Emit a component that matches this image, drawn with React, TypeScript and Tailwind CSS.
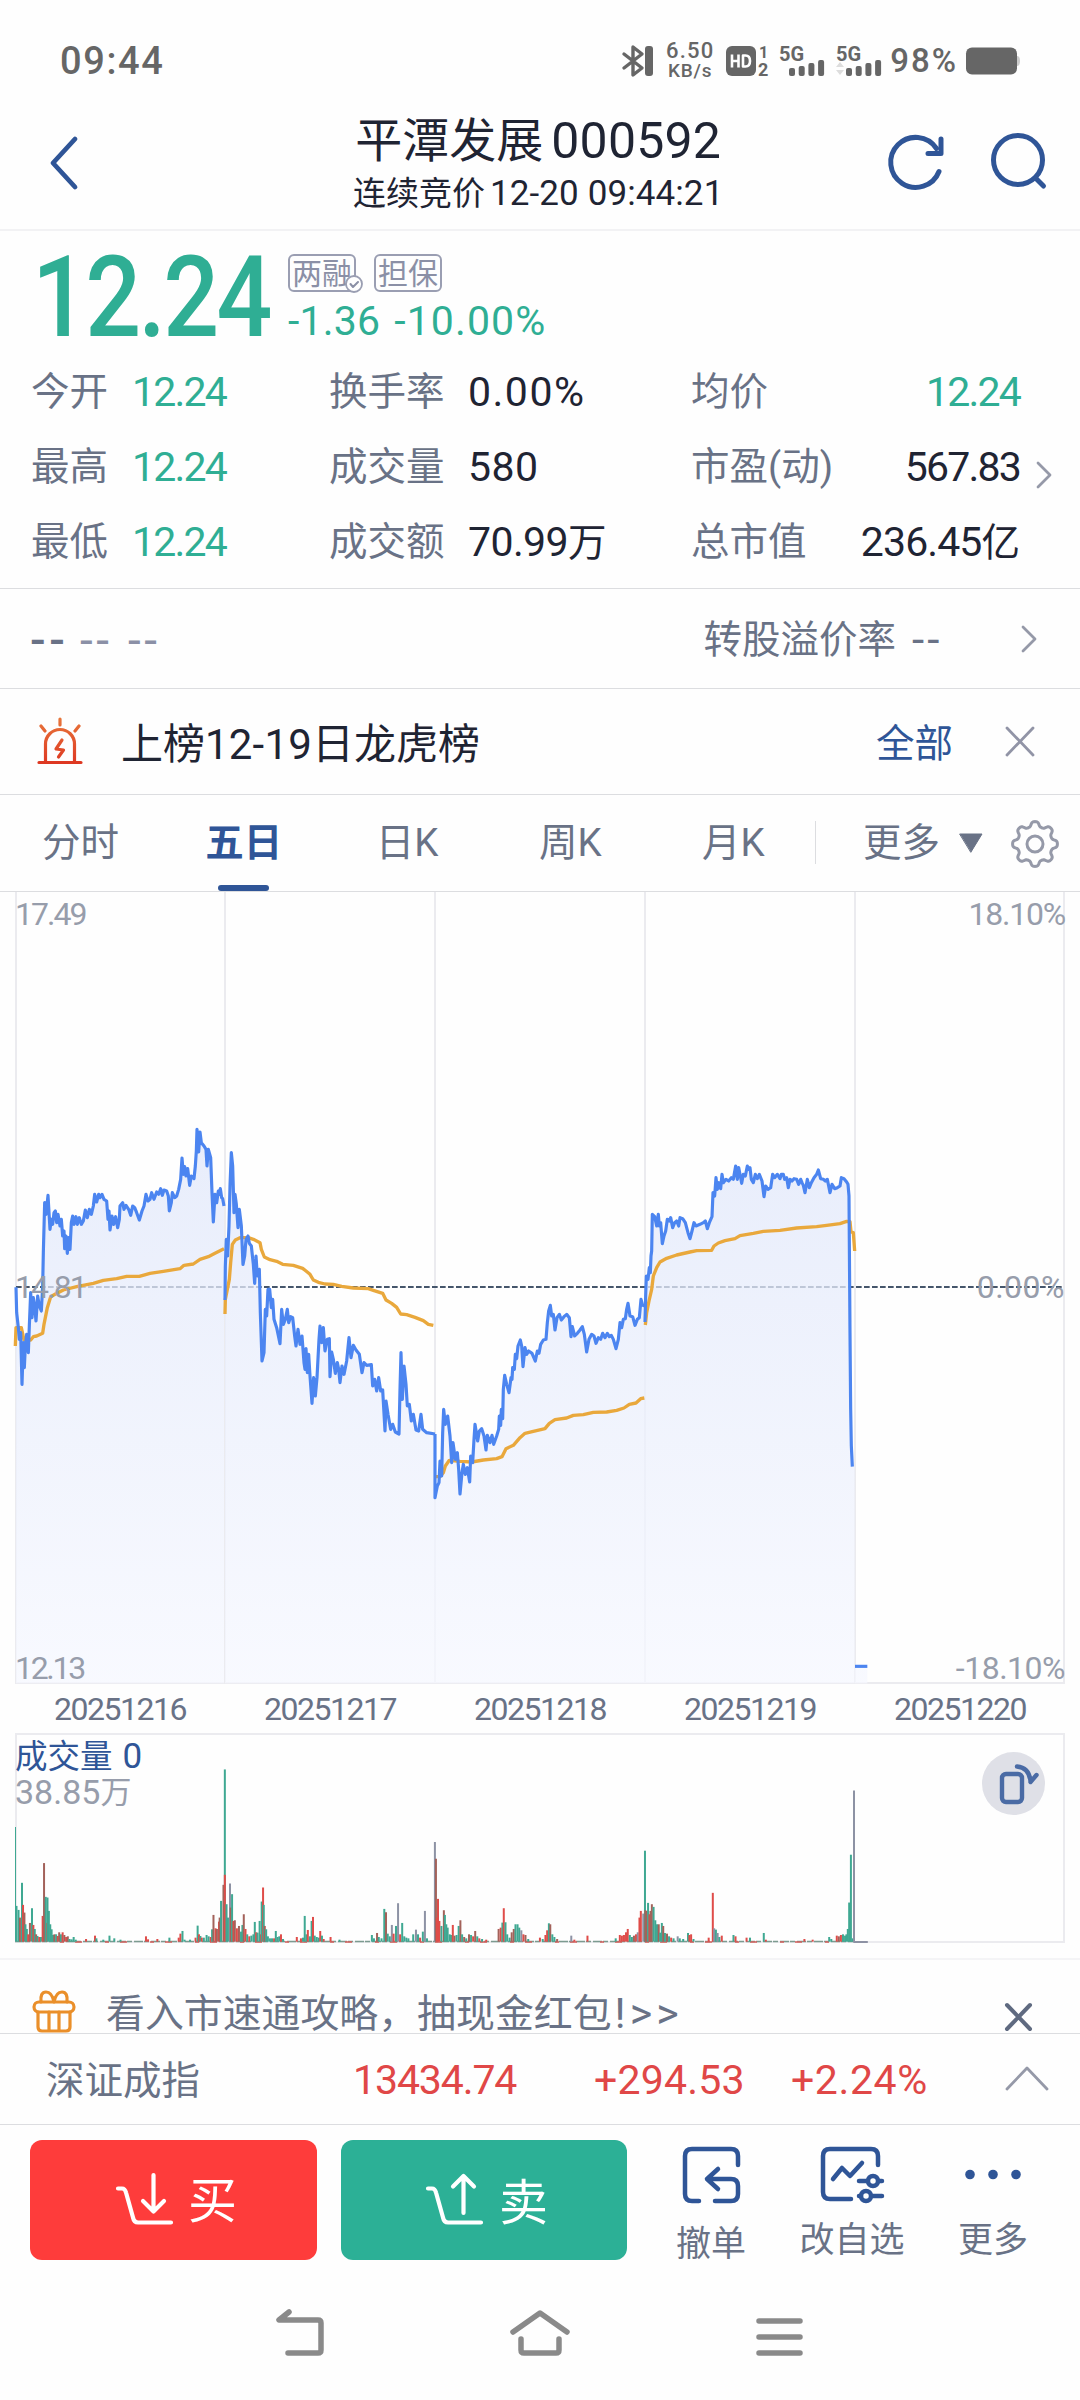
import type { ReactNode } from 'react';

const BLUE = '#2f5597';

// Traces are plotted at three units per pixel; dx shifts each session along the x axis.
const sessions = [
  {
    dx: 0,
    start: 48,
    end: 672,
    price:
      '48,624 50,700 55,745 58,780 62,760 66,915 70,790 73,865 76,800 80,765 85,820 88,740 92,640 96,715 100,655 104,680 108,725 113,650 118,680 124,695 128,620 130,520 134,370 138,405 144,348 150,450 154,420 158,435 162,400 166,395 170,430 174,405 180,440 184,420 188,470 192,455 194,508 198,470 202,522 206,475 210,510 214,430 218,410 222,435 228,412 232,435 238,415 244,435 250,425 256,392 262,415 268,390 274,405 280,380 284,345 290,368 296,345 300,355 306,345 312,360 320,365 324,420 327,395 330,452 336,410 341,435 347,412 353,445 358,420 360,380 368,370 372,390 378,378 386,390 392,408 398,380 404,385 410,400 418,422 426,395 432,380 438,345 444,365 450,360 455,340 462,360 470,338 476,345 482,328 487,348 492,332 500,335 505,350 508,395 514,370 517,340 524,355 530,350 536,330 542,300 546,236 550,285 554,262 558,290 563,268 569,318 574,290 582,298 586,260 589,215 591,150 596,218 600,158 604,190 612,200 618,210 621,260 625,210 632,235 636,340 640,428 645,345 650,370 655,335 658,345 661,328 665,355 668,358 672,380',
    avg: '46,800 48,745 64,745 72,782 92,782 100,772 110,770 128,762 132,735 142,685 152,652 165,645 190,632 230,622 280,612 310,603 350,598 380,591 418,591 450,582 490,576 540,568 552,558 580,554 600,540 625,532 645,522 672,508',
  },
  {
    dx: 0,
    start: 675,
    end: 1305,
    price:
      '675,662 676,560 679,480 683,530 687,440 690,320 694,220 698,260 702,400 705,345 709,375 714,445 718,390 724,440 729,555 734,530 738,480 744,470 748,492 754,500 760,555 764,612 768,530 772,590 778,570 781,700 786,845 792,820 796,690 800,710 804,630 809,630 814,685 818,660 822,720 830,745 840,793 845,690 850,735 856,720 862,690 866,730 872,712 878,715 884,770 888,800 894,750 900,795 906,770 912,850 915,870 918,808 922,880 926,825 930,890 936,972 941,895 946,950 951,895 957,780 960,740 965,790 970,745 975,815 982,780 988,778 990,892 995,818 1000,840 1006,882 1012,850 1016,870 1020,910 1026,860 1032,885 1040,845 1047,775 1053,835 1060,798 1068,812 1078,825 1086,880 1092,850 1100,858 1114,856 1118,920 1124,900 1130,935 1136,895 1142,935 1148,932 1155,1055 1158,965 1164,1005 1172,1050 1178,1035 1186,1058 1197,1064 1200,930 1203,820 1207,960 1212,860 1218,915 1222,980 1228,975 1234,1025 1240,1005 1248,1052 1256,1055 1263,1005 1268,1050 1280,1060 1305,1064',
    avg: '675,704 676,660 682,630 688,600 692,550 697,495 706,482 720,475 745,475 760,480 780,490 784,510 793,533 810,541 830,546 848,555 880,558 908,567 918,575 930,585 940,602 955,609 975,614 1000,615 1025,621 1060,626 1105,628 1120,633 1148,642 1158,662 1175,672 1190,684 1202,704 1220,706 1245,714 1270,724 1285,735 1300,738',
  },
  {
    dx: 1200,
    start: 105,
    end: 735,
    price:
      '105,1064 105,1255 112,1220 117,1210 120,1145 125,1190 128,1060 131,990 136,1035 143,1010 150,1070 155,1150 159,1090 166,1140 172,1120 176,1170 180,1244 186,1180 190,1155 196,1185 202,1165 209,1208 212,1130 218,1150 222,1080 225,1035 233,1085 238,1055 245,1048 252,1070 258,1112 262,1068 270,1090 276,1068 281,1095 290,1070 296,1050 298,1010 302,1038 304,990 308,1018 310,930 314,888 320,915 327,940 333,895 336,900 338,865 343,870 346,825 350,838 354,800 361,782 365,800 369,862 375,805 380,825 386,815 396,822 406,845 412,815 417,822 422,795 430,782 438,780 442,730 446,695 451,678 455,710 460,705 465,752 471,715 478,705 484,722 492,712 500,705 508,715 513,772 517,742 524,770 532,762 540,752 547,742 553,765 560,818 567,780 575,765 582,770 588,792 595,775 602,780 608,762 615,775 622,762 628,772 634,768 640,780 648,808 655,780 660,730 665,745 670,720 676,718 680,690 684,672 690,710 698,712 705,738 712,720 718,715 723,660 728,678 735,680',
    avg: '108,1192 120,1192 130,1180 136,1160 148,1143 180,1146 215,1148 250,1142 290,1138 306,1132 318,1108 340,1098 360,1075 375,1062 400,1056 435,1048 448,1032 465,1021 500,1016 520,1008 550,1006 580,999 620,998 650,993 672,986 688,975 708,971 722,958 733,956',
  },
  {
    dx: 1860,
    start: 75,
    end: 704,
    price:
      '75,728 77,650 79,590 84,600 88,565 91,580 93,530 95,515 97,405 104,412 110,440 115,405 118,440 122,430 127,493 132,470 137,455 142,420 148,425 152,415 158,445 164,430 170,425 176,440 180,415 188,418 196,430 204,460 210,478 216,455 222,430 228,440 240,435 250,430 256,425 262,448 268,430 276,412 279,340 284,350 288,295 292,330 297,310 302,328 306,285 310,310 318,300 326,305 334,295 340,300 347,260 352,300 356,265 361,290 365,312 370,285 376,290 382,260 386,270 390,265 394,300 400,310 406,285 412,298 418,285 426,305 432,352 437,320 444,330 452,325 458,285 464,295 472,285 480,298 484,285 490,285 494,300 500,295 505,325 510,300 516,305 522,298 530,300 536,315 542,300 546,310 550,318 555,340 562,300 568,325 574,310 582,295 590,285 595,272 602,298 610,300 616,305 622,300 626,320 630,340 636,315 644,328 652,325 660,320 664,295 672,298 680,308 684,315 687,350 690,760 692,990 694,1100 697,1162',
    avg: '76,737 80,700 87,665 95,630 100,590 110,565 120,548 140,537 170,527 210,518 230,514 275,513 282,500 295,491 315,484 345,478 360,469 400,462 430,456 480,453 530,446 590,442 620,438 660,433 680,426 690,427 693,458 700,460 704,515',
  },
  { dx: 1860, start: 705, end: 742, price: '705,1761 742,1761', avg: '' },
];

// position:height+colour (g down, r up, n flat, b mixed)
const volumes =
  '48:105g 54:93g 58:70b 64:174g 67:108r 71:85b 74:50g 78:36g 82:20r 87:54b 93:98g 97:48r 101:36g 105:20b 109:15g 114:12r 119:12g 124:75r 128:233b 133:132g 137:54r 138:130g 142:90g 146:50g 150:35g 154:18g 158:20b 163:20g 168:15r 172:26b 177:20g 182:26r 187:18b 192:12r 197:14b 202:6g 208:5g 214:12g 220:4g 250:6r 276:16r 280:8g 300:4g 318:16g 332:8g 350:4g 424:14r 430:5r 457:6r 492:10g 519:10r 524:22r 530:30g 536:4g 552:4g 568:10r 574:46g 578:20r 582:15g 586:10r 592:10g 600:18g 606:14g 612:12r 616:35g 620:78b 626:38r 630:36b 636:58r 638:70b 642:120g 649:168b 653:513g 653:198r 658:110g 662:70g 668:172n 670:100b 674:140g 678:60r 682:62b 688:38r 694:45b 700:28g 704:48g 708:80b 713:36r 718:20g 724:14r 730:16g 736:20g 740:57g 744:26r 748:25g 754:60g 758:20r 760:118g 764:160r 766:108g 769:45b 773:35g 778:14g 784:8g 790:8g 796:8r 801:30g 806:12g 811:14g 816:20r 822:6g 862:12r 874:8r 880:10g 885:75g 890:20g 894:33r 900:14g 905:60g 909:72r 914:16g 920:12g 926:10g 930:30r 935:16g 940:6r 960:12r 986:4g 1080:18g 1086:8g 1095:24b 1100:12g 1108:8g 1116:96g 1121:86b 1126:22g 1132:14g 1138:48n 1143:22r 1150:45g 1156:113n 1162:20r 1168:54g 1174:14g 1180:10g 1186:8g 1200:20g 1208:34n 1214:20g 1220:10r 1228:28g 1234:90n 1240:8g 1263:296n 1266:246b 1269:70r 1272:126r 1276:60r 1282:45g 1289:92b 1292:78g 1296:50g 1300:40g 1306:20g 1310:18g 1315:48r 1320:16b 1326:18g 1332:45g 1337:62b 1342:20g 1348:12b 1354:8g 1362:20b 1368:18g 1374:14r 1380:30b 1386:14g 1392:8r 1400:6g 1412:4r 1448:36b 1454:40r 1459:55g 1463:98r 1468:56g 1473:20g 1480:10g 1486:26b 1492:36b 1497:50g 1503:50g 1508:40g 1514:32n 1520:20r 1526:18b 1534:6g 1568:10r 1576:6g 1584:18r 1589:32r 1594:53g 1598:50b 1604:20g 1610:12g 1618:6b 1659:16n 1668:4r 1706:16r 1788:8g 1800:18r 1806:16r 1812:18r 1818:26r 1823:36r 1829:18g 1835:12g 1841:16b 1847:20r 1852:26n 1857:70r 1861:90r 1868:82n 1873:270g 1874:92b 1878:90b 1882:114g 1886:80r 1889:90b 1893:110b 1898:102g 1903:62g 1908:50g 1913:50b 1917:25g 1922:54g 1926:45b 1931:24g 1937:22b 1943:14g 1949:10r 1956:8g 1968:14n 1974:8g 1984:6g 1998:24g 2002:18r 2007:20r 2014:6g 2058:10r 2070:144r 2074:38n 2079:34g 2084:24n 2089:12g 2096:16r 2130:18g 2136:14r 2168:10r 2178:10g 2218:24g 2224:4r 2336:6r 2360:4r 2408:12g 2414:6g 2430:16r 2436:14b 2442:18r 2448:20g 2454:16g 2458:20g 2462:36g 2466:115g 2471:258g 2476:8g 2480:450n'
    .split(' ')
    .map((v) => {
      const [x, rest] = v.split(':');
      return { x: Number(x), h: parseInt(rest, 10), kind: rest.slice(-1) };
    });

const barColor: Record<string, string> = { g: '#3fa892', r: '#df4c49', n: '#8d92a4', b: '#a3625a' };

// eight-lobed outline around (25, 25)
const gearPoints = Array.from({ length: 160 }, (_, i) => {
  const a = (i / 160) * Math.PI * 2;
  const r = 20 + 2.6 * Math.tanh(1.6 * Math.cos(8 * a));
  return `${(25 + r * Math.sin(a)).toFixed(2)},${(25 - r * Math.cos(a)).toFixed(2)}`;
}).join(' ');

function Icon({ w, h, className = '', children }: { w: number; h: number; className?: string; children: ReactNode }) {
  return (
    <svg
      width={w}
      height={h}
      viewBox={`0 0 ${w} ${h}`}
      fill="none"
      strokeLinecap="round"
      strokeLinejoin="round"
      className={`block shrink-0 overflow-visible ${className}`}
    >
      {children}
    </svg>
  );
}

function Signal({ data }: { data?: boolean }) {
  return (
    <Icon w={46} h={32}>
      <text x="0" y="15.5" fontSize="20" fontWeight="700" fill="#666">5G</text>
      {[8, 10, 13, 16].map((h, i) => (
        <rect key={h} x={10 + i * 9.7} y={31 - h} width="6" height={h} rx="2" fill="#666" />
      ))}
      {data && <path d="M0 22l4-5 4 5zM0 25h8l-4 5z" fill="#ddd" />}
    </Icon>
  );
}

function StatusBar() {
  return (
    <div className="flex h-[94px] items-center pt-[28px] pr-[60px] pl-[60px] font-medium text-[#666]">
      <span className="text-[38px] leading-none tracking-[1.6px]">09:44</span>
      <div className="ml-auto flex items-center">
        <Icon w={32} h={32}>
          <path d="M2 9l18 14-9 7V2l9 7L2 23" stroke="#666" strokeWidth="3.4" />
          <rect x="23" y="1" width="8" height="30" rx="3" fill="#666" />
        </Icon>
        <div className="ml-[10px] flex w-[52px] flex-col items-center leading-none">
          <span className="text-[22px] leading-[20px] tracking-[1.2px]">6.50</span>
          <span className="text-[19px] leading-[19px] tracking-[0.8px]">KB/s</span>
        </div>
        <Icon w={44} h={32} className="ml-[10px]">
          <rect x="0" y="1" width="30" height="30" rx="6" fill="#666" />
          <path d="M6 9.500v13M12.500 9.500v13M6 16h6.500M17 10.500v11h2.500q4.500 0 4.500-5.500t-4.500-5.500z" stroke="#fff" strokeWidth="2.600" strokeLinecap="butt" />
          <text x="33" y="13" fontSize="16" fontWeight="700" fill="#666">1</text>
          <text x="32" y="31" fontSize="18" fontWeight="700" fill="#666">2</text>
        </Icon>
        <div className="ml-[9px]"><Signal /></div>
        <div className="ml-[11px]"><Signal data /></div>
        <span className="ml-[8px] text-[33px] leading-none tracking-[2px]">98%</span>
        <Icon w={54} h={28} className="ml-[8px]">
          <rect x="0" y="0.500" width="51" height="27" rx="6" fill="#666" />
          <path d="M51 9q3 0 3 5t-3 5z" fill="#ccc" />
        </Icon>
      </div>
    </div>
  );
}

function Header() {
  return (
    <header className="flex h-[137px] items-center border-b-2 border-[#f2f2f4] pt-[3px] pr-[32px] pl-[50px]">
      <Icon w={30} h={56}>
        <path d="M25 4L3 28L25 52" stroke={BLUE} strokeWidth="4.800" />
      </Icon>
      <div className="mt-[4px] ml-[273px] flex flex-col items-center text-[#1f2433]">
        <h1 className="flex items-center gap-[8px] leading-[58px]">
          <span className="text-[47px]">平潭发展</span>
          <span className="text-[50px] tracking-[0.200px]">000592</span>
        </h1>
        <p className="flex items-center gap-[5px] leading-[48px]">
          <span className="text-[33px]">连续竞价</span>
          <span className="text-[35px] tracking-[0.100px]">12-20 09:44:21</span>
        </p>
      </div>
      <div className="ml-auto flex items-center gap-[42px]">
        <Icon w={60} h={60}>
          <path d="M51 38.500A25 25 0 1 1 48.500 15.500" stroke={BLUE} strokeWidth="5" />
          <path d="M53 6v14.500H40" stroke={BLUE} strokeWidth="5" />
        </Icon>
        <Icon w={58} h={60}>
          <circle cx="28" cy="27" r="24.500" stroke={BLUE} strokeWidth="5" />
          <path d="M45.500 45L53.500 53" stroke={BLUE} strokeWidth="5" />
        </Icon>
      </div>
    </header>
  );
}

function Tag({ children, checked }: { children: string; checked?: boolean }) {
  return (
    <span className="relative flex h-[38px] w-[68px] items-center justify-center rounded-[6px] border-2 border-[#9a9eb2] pt-[2px] text-[30px] leading-none text-[#8b90a6]">
      {children}
      {checked && (
        <span className="absolute -right-[9px] -bottom-[3px]">
          <Icon w={18} h={18}>
            <circle cx="9" cy="9" r="8" fill="#fff" stroke="#9a9eb2" strokeWidth="1.800" />
            <path d="M5.500 9l2.500 3 5-5" stroke="#8b90a6" strokeWidth="2" />
          </Icon>
        </span>
      )}
    </span>
  );
}

const quoteRows = [
  {
    a: ['今开', '12.24'],
    b: ['换手率', '0.00%', ''],
    bTracking: 'tracking-[1.500px]',
    c: ['均价', '12.24', ''],
    cColor: 'text-[#2fae94]',
    cTracking: 'tracking-[-1.800px]',
  },
  {
    a: ['最高', '12.24'],
    b: ['成交量', '580', ''],
    bTracking: 'tracking-[0.500px]',
    c: ['市盈(动)', '567.83', ''],
    cColor: 'text-[#1f2433]',
    cTracking: 'tracking-[-1.800px]',
  },
  {
    a: ['最低', '12.24'],
    b: ['成交额', '70.99', '万'],
    bTracking: 'tracking-[-0.600px]',
    c: ['总市值', '236.45', '亿'],
    cColor: 'text-[#1f2433]',
    cTracking: 'tracking-[-0.900px]',
  },
];

function Quote() {
  return (
    <section className="relative h-[358px] border-b border-[#dcdde0]">
      <div className="flex h-[124px] pt-[22px] pl-[32px]">
        <span className="w-[256px] origin-left scale-x-[0.87] pt-px text-[113px] leading-[88px] font-medium tracking-[-3px] text-[#2fae94]">12.24</span>
        <div className="pt-px">
          <div className="flex gap-[18px]">
            <Tag checked>两融</Tag>
            <Tag>担保</Tag>
          </div>
          <div className="mt-[5px] flex gap-[14px] text-[41px] leading-[48px] text-[#2fae94]">
            <span className="tracking-[0.200px]">-1.36</span>
            <span className="tracking-[1.100px]">-10.00%</span>
          </div>
        </div>
      </div>
      {quoteRows.map((r) => (
        <div key={r.a[0]} className="flex h-[75px] items-center pr-[60px] pl-[31px] text-[38.500px] text-[#697286]">
          <span className="w-[101px]">{r.a[0]}</span>
          <span className="w-[197px] text-[41px] tracking-[-1.800px] text-[#2fae94]">{r.a[1]}</span>
          <span className="w-[139px]">{r.b[0]}</span>
          <span className="w-[223px] text-[#1f2433]">
            <span className={`text-[41px] ${r.bTracking}`}>{r.b[1]}</span>
            {r.b[2]}
          </span>
          <span>{r.c[0]}</span>
          <span className={`ml-auto ${r.cColor}`}>
            <span className={`text-[41px] ${r.cTracking}`}>{r.c[1]}</span>
            {r.c[2]}
          </span>
        </div>
      ))}
      <div className="absolute top-[229px] right-[27px]">
        <Icon w={18} h={30}>
          <path d="M3 3l12 12L3 27" stroke="#9599a8" strokeWidth="2.800" />
        </Icon>
      </div>
    </section>
  );
}

function ConvertRow() {
  return (
    <section className="flex h-[101px] items-center border-b border-[#dcdde0] pt-[3px] pr-[42px] pl-[30px] text-[38.500px] text-[#697286]">
      <span className="w-[50px] text-[46px] font-medium tracking-[3.500px]">--</span>
      <span className="w-[48px] text-[46px] tracking-[3.500px] text-[#8b90a6]">--</span>
      <span className="text-[46px] tracking-[3.500px] text-[#8b90a6]">--</span>
      <span className="ml-auto">转股溢价率</span>
      <span className="ml-[16px] w-[36px] text-[44px] tracking-[3px]">--</span>
      <Icon w={18} h={30} className="mt-[-3px] ml-[72px]">
        <path d="M3 3l12 12L3 27" stroke="#9599a8" strokeWidth="2.800" />
      </Icon>
    </section>
  );
}

function AlertRow() {
  return (
    <section className="flex h-[106px] items-center border-b border-[#dcdde0] pr-[44px] pl-[36px]">
      <Icon w={48} h={50} className="-mt-px">
        <defs>
          <linearGradient id="siren" x1="0" y1="0" x2="0" y2="50" gradientUnits="userSpaceOnUse">
            <stop offset="0" stopColor="#e8793c" />
            <stop offset="1" stopColor="#dd3420" />
          </linearGradient>
        </defs>
        <g stroke="url(#siren)" strokeWidth="3.200">
          <path d="M24.010 3L24 9M5 10l4 5M43 10l-4 5M9.500 45V28a14.500 14.500 0 0 1 29 0v17M3 46.500l42-.01" />
          <path d="M26 24l-6 9 7.500 1-5 7" />
        </g>
      </Icon>
      <span className="mt-[5px] ml-[37px] flex items-center text-[42px] text-[#1f2433]">
        上榜<span className="text-[42px] tracking-[0.200px]">12-19</span>日龙虎榜
      </span>
      <span className="mt-[4px] ml-auto text-[38.500px] text-[#2f5597]">全部</span>
      <Icon w={32} h={32} className="mt-px ml-[51px]">
        <path d="M3 2l26 27M29 2L3 29" stroke="#9194a6" strokeWidth="2.800" />
      </Icon>
    </section>
  );
}

const tabs = ['分时', '五日', '日K', '周K', '月K'];

function Tabs() {
  return (
    <nav className="flex h-[97px] items-center border-b border-[#dcdde0] text-[38.500px] text-[#697286]">
      <div className="-ml-px flex h-full w-[816px]">
        {tabs.map((t) => (
          <div
            key={t}
            className={`relative flex flex-1 items-center justify-center ${t === '五日' ? 'font-bold text-[#2f5597]' : ''}`}
          >
            {t}
            {t === '五日' && <span className="absolute bottom-0 h-[6px] w-[51px] rounded-full bg-[#2f5597]" />}
          </div>
        ))}
      </div>
      <span className="mt-[-2px] h-[43px] w-px bg-[#dcdde0]" />
      <span className="ml-[47px]">更多</span>
      <Icon w={26} h={22} className="ml-[18px]">
        <path d="M2 2h22L13 20z" fill="#697286" stroke="#697286" />
      </Icon>
      <Icon w={50} h={50} className="mt-px ml-[26px]">
        <g stroke="#9599a8" strokeWidth="3">
          <polygon points={gearPoints} />
          <circle cx="25" cy="25" r="8" />
        </g>
      </Icon>
    </nav>
  );
}

function PriceChart() {
  return (
    <section className="relative h-[792px]">
      <svg width="1080" height="792" viewBox="0 0 3240 2376" fill="none" className="block">
        <defs>
          <linearGradient id="area" x1="0" y1="100" x2="0" y2="1812" gradientUnits="userSpaceOnUse">
            <stop offset="0" stopColor="#e0e7fa" />
            <stop offset="1" stopColor="#f6f8ff" />
          </linearGradient>
        </defs>
        <g stroke="#ebebef" strokeWidth="6">
          <path d="M48 0V2373M675 0V2373M1305 0V2373M1935 0V2373M2565 0V2373M3192 0V2373M45 2373H3195" />
        </g>
        <path d="M48 1185H3192" stroke="#45566b" strokeWidth="6" strokeDasharray="17 7" />
        <g transform="translate(0 562)">
          {sessions.map((s) => (
            <g key={s.dx + s.start} transform={`translate(${s.dx} 0)`}>
              <path
                d={`M${s.start},1812 L${s.price} L${s.end},${s.price.split(',').pop()} V1812Z`}
                fill="url(#area)"
                fillOpacity="0.75"
              />
            </g>
          ))}
          {sessions.map((s) => (
            <g key={s.dx + s.start} transform={`translate(${s.dx} 0)`} strokeLinejoin="round">
              {s.avg && <polyline points={s.avg} stroke="#e9a83c" strokeWidth="10" />}
              <polyline points={s.price} stroke="#4c85f0" strokeWidth="9.500" />
            </g>
          ))}
        </g>
      </svg>
      <div className="absolute inset-x-[15px] top-[4px] flex justify-between text-[32px] leading-[36px] text-[#979dab]">
        <span className="tracking-[-2px]">17.49</span>
        <span className="tracking-[-1.200px]">18.10%</span>
      </div>
      <div className="absolute inset-x-[15px] top-[377px] flex justify-between text-[32px] leading-[36px] text-[#979dab]">
        <span className="tracking-[-1.900px]">14.81</span>
        <span className="tracking-[0.500px]">0.00%</span>
      </div>
      <div className="absolute inset-x-[15px] bottom-[-2px] flex justify-between text-[32px] leading-[36px] text-[#979dab]">
        <span className="tracking-[-2.300px]">12.13</span>
        <span className="tracking-[-0.500px]">-18.10%</span>
      </div>
    </section>
  );
}

const dates = ['20251216', '20251217', '20251218', '20251219', '20251220'];

function VolumeChart() {
  return (
    <section className="border-b-2 border-[#f4f4f6] pb-[15px]">
      <div className="grid h-[49px] grid-cols-5 items-center px-[15px] text-center text-[32px] leading-none tracking-[-1.500px] text-[#697286]">
        {dates.map((d) => (
          <span key={d}>{d}</span>
        ))}
      </div>
      <div className="relative mx-[15px] h-[210px] border-2 border-[#ebebef]">
        <svg width="1048" height="210" viewBox="15 1734 1048 210" className="absolute -top-[2px] -left-[2px]">
          <path d="M15 1942.500H854" stroke="#7c9b90" strokeWidth="1.500" strokeDasharray="9 1 5 2" />
          <path d="M60 1943H840" stroke="#d35f5b" strokeWidth="1.500" strokeDasharray="4 11 7 23" />
          <path d="M15.500 1828V1942" stroke="#3fa892" />
          <g transform="translate(0 1640) scale(0.34437 0.33445)">
            {volumes.map((v) => (
              <rect key={`${v.x}${v.h}`} x={v.x - 3} y={903 - v.h} width="5.800" height={v.h + 2} fill={barColor[v.kind]} />
            ))}
            <path d="M2478 906h42" stroke="#8d92a4" strokeWidth="6" />
          </g>
        </svg>
        <p className="-ml-[2px] flex h-[42px] items-center gap-[10px] pt-px text-[32.500px] leading-none text-[#2f5597]">
          成交量 <span className="text-[35px]">0</span>
        </p>
        <p className="-ml-[2px] flex h-[30px] items-center leading-none text-[#979dab]">
          <span className="text-[34px]">38.85</span>
          <span className="text-[31px]">万</span>
        </p>
        <button className="absolute top-[17px] right-[18px] flex size-[63px] items-center justify-center rounded-full bg-[#dfe0e7]">
          <Icon w={63} h={63}>
            <rect x="20" y="22" width="20" height="28" rx="4" stroke="#4a6ba5" strokeWidth="4.400" />
            <path d="M35 14.500q12 1 13.500 14.500M48.500 30l6-7" stroke="#4a6ba5" strokeWidth="4.400" />
          </Icon>
        </button>
      </div>
    </section>
  );
}

function Banner() {
  return (
    <section className="flex h-[74px] items-end border-b border-[#dcdde0] pr-[45px] pl-[32px] text-[38.900px] text-[#697286]">
      <Icon w={44} h={44}>
        <g stroke="#ea8f2a" strokeWidth="3.200">
          <rect x="2" y="13" width="40" height="10" rx="5" />
          <path d="M6 23v15q0 4 4 4h24q4 0 4-4V23M17 23v19M27 23v19" />
          <path d="M22 13q-2-10-8-10-6 0-5 10M22 13q2-10 8-10 6 0 5 10" />
        </g>
      </Icon>
      <span className="ml-[30px] flex items-center leading-[39px]">
        看入市速通攻略，抽现金红包<span className="ml-[3px] text-[43px] tracking-[4px]">!&gt;&gt;</span>
      </span>
      <Icon w={32} h={32} className="ml-auto">
        <path d="M4 4l23 24M27 4L4 28" stroke="#5f6a80" strokeWidth="4" />
      </Icon>
    </section>
  );
}

function IndexRow() {
  return (
    <section className="flex h-[91px] items-center border-b border-[#dcdde0] pt-[4px] pr-[30px] pl-[46px] text-[38.500px] text-[#697286]">
      <span className="w-[307px]">深证成指</span>
      <span className="w-[241px] text-[41px] tracking-[-1.100px] text-[#e04747]">13434.74</span>
      <span className="w-[197px] text-[41px] tracking-[0.200px] text-[#e04747]">+294.53</span>
      <span className="text-[41px] tracking-[0.600px] text-[#e04747]">+2.24%</span>
      <Icon w={46} h={28} className="mt-[-6px] ml-auto">
        <path d="M3 25L23 4l20 21" stroke="#9599a8" strokeWidth="2.800" />
      </Icon>
    </section>
  );
}

function Cart({ down }: { down?: boolean }) {
  return (
    <Icon w={60} h={54}>
      <g stroke="#fff" strokeWidth="4.200">
        <path d="M3 15.500h4q3 0 4 4l7 25q1 5 5 5h33" />
        {down ? <path d="M38.500 2v36M28 28l10.500 10.500L49 28" /> : <path d="M38.500 40V3M28 13.500L38.500 3 49 13.500" />}
      </g>
    </Icon>
  );
}

function BottomBar() {
  return (
    <footer className="flex h-[151px] items-start pt-[15px] pl-[30px]">
      <button className="flex h-[120px] w-[287px] items-center justify-center gap-[13px] rounded-[12px] bg-[#fe3c3b] pl-[5px] text-[49px] leading-none text-white">
        <Cart down />
        <span className="pt-[3px]">买</span>
      </button>
      <button className="ml-[24px] flex h-[120px] w-[286px] items-center justify-center gap-[14px] rounded-[12px] bg-[#2cb096] pl-[5px] text-[49px] leading-none text-white">
        <Cart />
        <span className="pt-[6px]">卖</span>
      </button>
      <div className="ml-[38px] flex w-[92px] flex-col items-center pt-[5px] text-[35px] leading-none text-[#697286]">
        <Icon w={60} h={60}>
          <path
            d="M57 20V11q0-7-7-7H11q-7 0-7 7v38q0 7 7 7h7M34 56h16q7 0 7-7V41q0-7-7-7H26M37 24L26 34l11 10"
            stroke={BLUE}
            strokeWidth="4.500"
          />
        </Icon>
        <span className="mt-[22px]">撤单</span>
      </div>
      <div className="ml-[40px] flex w-[110px] flex-col items-center pt-[5px] text-[35px] leading-none text-[#697286]">
        <Icon w={68} h={60}>
          <g stroke={BLUE} strokeWidth="4.500">
            <path d="M60 20V11q0-7-7-7H12q-7 0-7 7v36q0 7 7 7h21M15 34l9-11 8 8 12-13" />
            <path d="M41 36h8M61 36h3M41 51h2M55 51h9" />
            <circle cx="55" cy="36" r="5" />
            <circle cx="48" cy="51" r="5" />
          </g>
        </Icon>
        <span className="mt-[18px]">改自选</span>
      </div>
      <div className="ml-[40px] flex w-[92px] flex-col items-center pt-[5px] text-[35px] leading-none text-[#697286]">
        <Icon w={60} h={60}>
          <g fill={BLUE}>
            <circle cx="7" cy="29.500" r="4.800" />
            <circle cx="30" cy="29.500" r="4.800" />
            <circle cx="53" cy="29.500" r="4.800" />
          </g>
        </Icon>
        <span className="mt-[18px]">更多</span>
      </div>
    </footer>
  );
}

function SystemNav() {
  return (
    <div className="flex h-[124px] items-center pb-[11px] pl-[275px]">
      <Icon w={50} h={48}>
        <path d="M14 3L4 11h39q3 0 3 3v27q0 3-3 3H13" stroke="#8a8a8a" strokeWidth="5.500" />
      </Icon>
      <Icon w={62} h={48} className="ml-[184px]">
        <path d="M4 23L31 4l27 19M12 30v11q0 3 3 3h32q3 0 3-3V30" stroke="#8a8a8a" strokeWidth="5.500" />
      </Icon>
      <Icon w={50} h={48} className="ml-[184px]">
        <path d="M4 12h41M4 28h41M4 44h41" stroke="#8a8a8a" strokeWidth="5.500" />
      </Icon>
    </div>
  );
}

export default function App() {
  return (
    <main className="flex h-[2400px] w-[1080px] flex-col overflow-hidden bg-[#fefefe] [font-family:Roboto,'Noto_Sans_CJK_SC',sans-serif] whitespace-nowrap">
      <StatusBar />
      <Header />
      <Quote />
      <ConvertRow />
      <AlertRow />
      <Tabs />
      <PriceChart />
      <VolumeChart />
      <Banner />
      <IndexRow />
      <BottomBar />
      <SystemNav />
    </main>
  );
}
